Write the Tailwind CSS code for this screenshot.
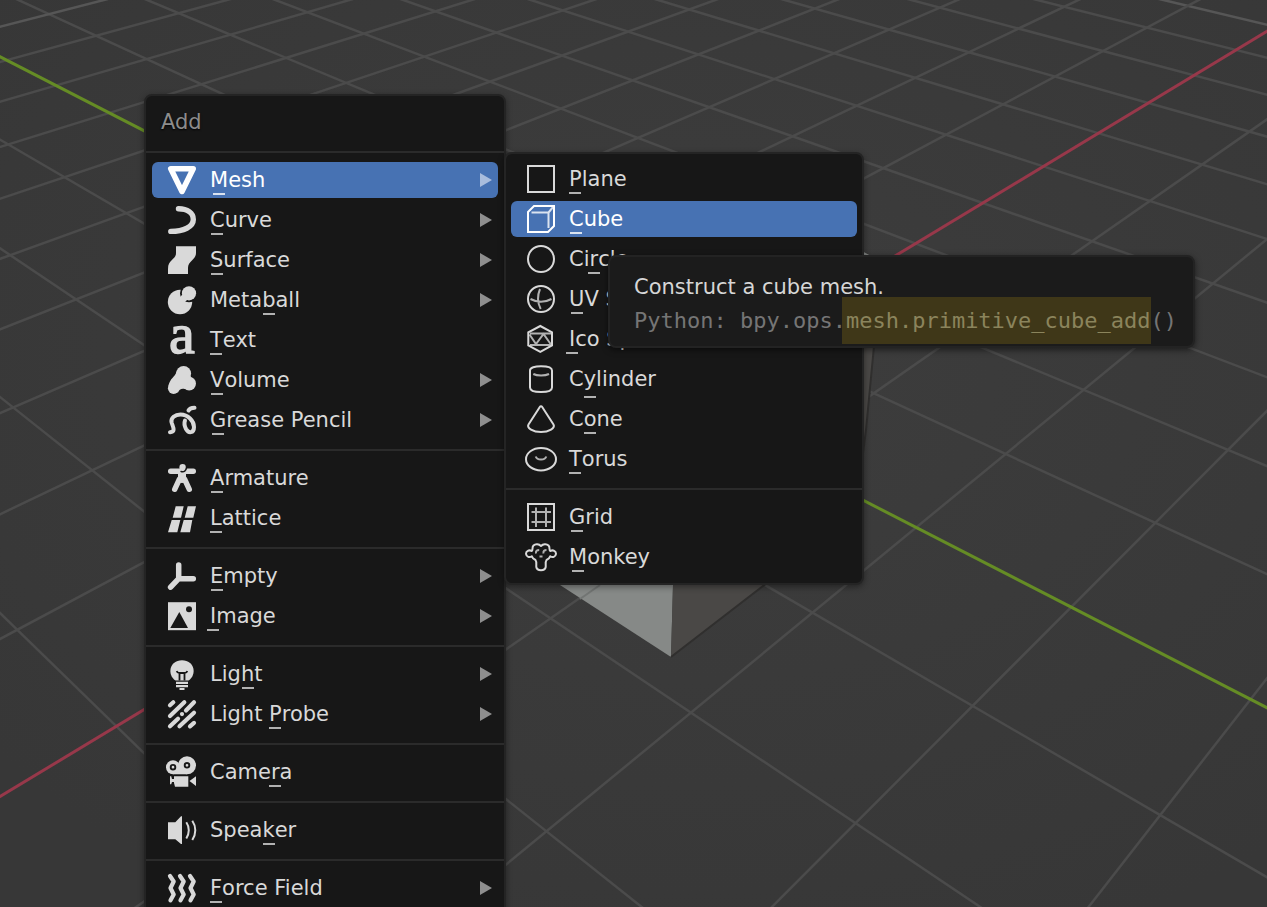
<!DOCTYPE html>
<html lang="en">
<head>
<meta charset="utf-8">
<meta name="viewport" content="width=device-width, initial-scale=1">
<title>Add menu</title>
<script src="https://cdn.jsdelivr.net/npm/@tailwindcss/browser@4"></script>
</head>
<body class="bg-[#393939]">
<main class="relative h-screen overflow-hidden font-['DejaVu_Sans',sans-serif] text-[21px] leading-9 text-[#d9d9d9]">

  <!-- 3D viewport: floor grid, axes and the default cube -->
  <svg class="absolute inset-0 size-full" viewBox="0 0 1267 907" preserveAspectRatio="xMinYMin slice" aria-hidden="true">
    <defs>
      <radialGradient id="floor" cx="0.55" cy="0.4" r="0.7">
        <stop offset="0" stop-color="#3d3d3d"/>
        <stop offset="1" stop-color="#373737"/>
      </radialGradient>
    </defs>
    <rect width="1267" height="907" fill="url(#floor)"/>
    <g id="grid" fill="none" stroke-width="2.5"></g>
    <path d="M560 585L400 480V300H673V585L671 657Z" fill="#868987"/>
    <path d="M580 599L600 585" stroke="#727573" stroke-width="2"/>
    <path d="M673 400V585L671 657L855 515L866 430L882 262Z" fill="#4a4846"/>
    <path d="M671 657L855 515L866 430L882 262" fill="none" stroke="#302f2e" stroke-width="2"/>
    <path d="M860 250L882 262H860Z" fill="#8d908e"/>
  </svg>

  <!-- Add menu -->
  <nav aria-label="Add" class="absolute top-[94px] left-[144px] flex w-[362px] flex-col rounded-lg border-2 border-[#242424] bg-[#171717] pb-10 shadow-[0_2px_6px_#0006] [text-shadow:0_1px_2px_#000] [&_button]:mx-1.5 [&_button]:my-0.5 [&_button]:flex [&_button]:h-9 [&_button]:items-center [&_button]:gap-3 [&_button]:rounded-md [&_button]:pr-1.5 [&_button]:pl-3.5 [&_hr]:mt-[9px] [&_hr]:mb-[7px] [&_hr]:border-t-2 [&_hr]:border-[#2b2b2b] [&_svg]:size-8 [&_svg]:shrink-0 [&_svg]:overflow-visible [&_i]:ml-auto [&_i]:h-3.5 [&_i]:w-3 [&_i]:bg-[#8e8e8e] [&_i]:[clip-path:polygon(0_0,100%_50%,0_100%)] [&_u]:relative [&_u]:no-underline [&_u]:after:absolute [&_u]:after:bottom-[-3px] [&_u]:after:left-1/2 [&_u]:after:h-0.5 [&_u]:after:w-3 [&_u]:after:-translate-x-1/2 [&_u]:after:bg-current [&_u]:after:opacity-80">
    <h1 class="h-[55px] pl-[15px] leading-[52px] text-[#8c8c8c]">Add</h1>
    <div class="mb-[7px] border-t-2 border-[#2b2b2b]"></div>
    <button class="bg-[#4772b3] text-white">
      <svg viewBox="0 0 32 32" aria-hidden="true"><path d="M4.8 4.8H27.2L16 27.4Z" fill="none" stroke="currentColor" stroke-width="5.6" stroke-linejoin="round"/></svg>
      <span><u>M</u>esh</span><i class="bg-[#a9bddd]!"></i>
    </button>
    <button>
      <svg viewBox="0 0 32 32" aria-hidden="true"><path d="M12.5 4.8C21.5 5 27.3 9 27.3 15.5C27.3 23 17.5 27.4 4.8 27.4" fill="none" stroke="currentColor" stroke-width="5.4" stroke-linecap="round"/></svg>
      <span><u>C</u>urve</span><i></i>
    </button>
    <button>
      <svg viewBox="0 0 32 32" aria-hidden="true"><path d="M10 2.2H30V9C30 16 22 17 22 24V30H2V25C2 15 10 16 10 9Z" fill="currentColor"/></svg>
      <span><u>S</u>urface</span><i></i>
    </button>
    <button>
      <svg viewBox="0 0 32 32" aria-hidden="true"><circle cx="14" cy="18" r="12.2" fill="currentColor"/><circle cx="23" cy="9.3" r="9" fill="#171717"/><circle cx="23" cy="9.3" r="7.1" fill="currentColor"/><path d="M14 18L21 11" stroke="currentColor" stroke-width="7"/></svg>
      <span>Meta<u>b</u>all</span><i></i>
    </button>
    <button>
      <svg viewBox="0 0 32 32" aria-hidden="true"><text x="3" y="29" fill="currentColor" stroke="currentColor" stroke-width="1.5" class="font-['Liberation_Serif',serif] text-[58px] [text-shadow:none]">a</text></svg>
      <span><u>T</u>ext</span>
    </button>
    <button>
      <svg viewBox="0 0 32 32" fill="currentColor" aria-hidden="true"><circle cx="17.6" cy="9.6" r="7.5"/><circle cx="7.6" cy="24.2" r="5.7"/><circle cx="23.2" cy="19.6" r="6.8"/><path d="M10.4 8C9 13 4 14 2.4 22L12 28.5C13 25 16 24 19 25L25 12Z"/></svg>
      <span><u>V</u>olume</span><i></i>
    </button>
    <button>
      <svg viewBox="0 0 32 32" fill="none" stroke="currentColor" stroke-width="4" stroke-linecap="round" aria-hidden="true"><path d="M4 28.2C10 27.5 7 23 5.600 18.500C4.500 14 9 10.500 14.500 10.500C22 10.500 28 17 28 23C28 29.500 22.500 29.500 20 25C18.500 22 18 19 19 16.500M22.500 6.500C23.500 4.500 25 4 28.500 3.800"/></svg>
      <span><u>G</u>rease Pencil</span><i></i>
    </button>
    <hr>
    <button>
      <svg viewBox="0 0 32 32" fill="none" stroke="currentColor" stroke-linecap="round" stroke-linejoin="round" aria-hidden="true"><circle cx="16.6" cy="5.300" r="3.200" fill="currentColor" stroke="none"/><path d="M4.700 9.300H27.300" stroke-width="5.400"/><path d="M16 12V17" stroke-width="8"/><path d="M8.700 27.300L13.500 17M23.300 27.300L18.500 17" stroke-width="5.400"/><path d="M15 9.500C18 10.500 20 9 20.800 5" stroke="#171717" stroke-width="1.400"/></svg>
      <span><u>A</u>rmature</span>
    </button>
    <button>
      <svg viewBox="0 0 32 32" fill="currentColor" aria-hidden="true"><path d="M9.700 4.300H17.700L15 15.700H6.700ZM21.700 4.300H30L27.300 15.700H18.700ZM5.700 18H14.300L11.300 30.300H2ZM17.700 18H26.300L24 30.300H14.300Z"/></svg>
      <span><u>L</u>attice</span>
    </button>
    <hr>
    <button>
      <svg viewBox="0 0 32 32" fill="none" stroke="currentColor" stroke-width="5.500" stroke-linecap="round" aria-hidden="true"><path d="M12.700 5V18.700H27.300M12.700 18.700L4.600 27.200"/></svg>
      <span><u>E</u>mpty</span><i></i>
    </button>
    <button>
      <svg viewBox="0 0 32 32" aria-hidden="true"><path d="M2 2.200H30V30.200H2Z" fill="currentColor"/><path d="M4.300 28L13.300 12L22 28Z" fill="#171717"/><circle cx="23" cy="9.300" r="3" fill="#171717"/></svg>
      <span><u>I</u>mage</span><i></i>
    </button>
    <hr>
    <button>
      <svg viewBox="0 0 32 32" aria-hidden="true"><path d="M9.500 22.500C1 17 3 2.200 16 2.200S31 17 22.500 22.500Z" fill="currentColor"/><path d="M10.700 13C11.500 15 12.500 15 16 15S20.500 15 21.300 13M13.500 15V22.500M18.500 15V22.500" fill="none" stroke="#171717" stroke-width="1.800"/><path d="M10 24.800H22M10 28.200H22M13.500 31H18.500" stroke="currentColor" stroke-width="2.200"/></svg>
      <span>Lig<u>h</u>t</span><i></i>
    </button>
    <button>
      <svg viewBox="0 0 32 32" fill="none" stroke="currentColor" stroke-width="4.200" stroke-linecap="round" aria-hidden="true"><path d="M4 7.300L7.300 4.300M4 18L18.300 4.300M4 28.300L12 20.700M20 12.500L28 4.300M13.500 28.300L28 14.700M24 28.300L28 24.900M16 16.100V16"/></svg>
      <span>Light <u>P</u>robe</span><i></i>
    </button>
    <hr>
    <button>
      <svg viewBox="0 0 32 32" aria-hidden="true"><g fill="currentColor"><circle cx="7" cy="11.200" r="7"/><circle cx="21" cy="9.300" r="9"/><path d="M7 13H21V18.300H7ZM8 20.300H22.300V30.700H9L8 27ZM4 20.300H5.200L6 23H8V26H6L5.200 28.300H4ZM30 20.300V30L23.500 25Z"/></g><g fill="none" stroke="#171717" stroke-width="1.900"><circle cx="7" cy="11.200" r="2.300"/><circle cx="21" cy="9.300" r="2.300"/></g></svg>
      <span>Came<u>r</u>a</span>
    </button>
    <hr>
    <button>
      <svg viewBox="0 0 32 32" aria-hidden="true"><path d="M2 8.300H9.300L15 2.300H16V30H15L9.300 25.300H2Z" fill="currentColor"/><path d="M20.300 8.300C23.600 13 23.600 19.500 20.300 24.500M26.300 6.700C30.300 12.500 30.300 20 26.300 26" fill="none" stroke="currentColor" stroke-width="2"/></svg>
      <span>Spea<u>k</u>er</span>
    </button>
    <hr>
    <button>
      <svg viewBox="0 0 32 32" fill="none" stroke="currentColor" stroke-width="4.200" stroke-linecap="round" stroke-linejoin="round" aria-hidden="true"><path d="M4 4L7.700 9.500L4.500 16L7.700 22.500L4.500 28.300M14 4L17.700 9.500L14.500 16L17.700 22.500L14.500 28.300M24 4L27.700 9.500L24.500 16L27.700 22.500L24.500 28.300"/></svg>
      <span><u>F</u>orce Field</span><i></i>
    </button>
  </nav>

  <!-- Mesh submenu -->
  <nav aria-label="Mesh" class="absolute top-[152px] left-[504px] flex w-[360px] flex-col rounded-lg border-2 border-[#242424] bg-[#171717] pt-[5px] pb-1.5 shadow-[0_2px_6px_#0006] [text-shadow:0_1px_2px_#000] [&_button]:mx-[5px] [&_button]:my-0.5 [&_button]:flex [&_button]:h-9 [&_button]:items-center [&_button]:gap-3 [&_button]:rounded-md [&_button]:pl-3.5 [&_hr]:mt-[9px] [&_hr]:mb-[7px] [&_hr]:border-t-2 [&_hr]:border-[#2b2b2b] [&_svg]:size-8 [&_svg]:shrink-0 [&_svg]:fill-none [&_svg]:stroke-current [&_svg]:stroke-2 [&_u]:relative [&_u]:no-underline [&_u]:after:absolute [&_u]:after:bottom-[-3px] [&_u]:after:left-1/2 [&_u]:after:h-0.5 [&_u]:after:w-3 [&_u]:after:-translate-x-1/2 [&_u]:after:bg-current [&_u]:after:opacity-80">
    <button>
      <svg viewBox="0 0 32 32" aria-hidden="true"><path d="M3 3H29V29H3Z"/></svg>
      <span><u>P</u>lane</span>
    </button>
    <button class="bg-[#4772b3] text-white">
      <svg viewBox="0 0 32 32" aria-hidden="true"><path d="M3 9L9 3H29V23L23 29H3Z"/><path d="M6.500 9.500H23.500M23.500 9.500V25M23.500 9.500L28.500 3.500" opacity=".8"/></svg>
      <span><u>C</u>ube</span>
    </button>
    <button>
      <svg viewBox="0 0 32 32" aria-hidden="true"><circle cx="16" cy="16" r="13"/></svg>
      <span>Ci<u>r</u>cle</span>
    </button>
    <button>
      <svg viewBox="0 0 32 32" aria-hidden="true"><circle cx="16" cy="16" r="13"/><path d="M15 6C12.500 12 12.500 20 15.700 26M5.500 16C12 19.500 20 19.500 26.500 16" opacity=".8"/></svg>
      <span><u>U</u>V Sphere</span>
    </button>
    <button>
      <svg viewBox="0 0 32 32" aria-hidden="true"><path d="M15.300 3L27 9.300V22.500L15.300 28.800L3.300 22.500V9.300Z"/><path d="M5 10.500H26M5 22H26M4.500 11.500L11 21L18.500 11L26 21.500" opacity=".8"/></svg>
      <span><u>I</u>co Sphere</span>
    </button>
    <button>
      <svg viewBox="0 0 32 32" aria-hidden="true"><path d="M5 7.500C5 4.500 10 3.300 16 3.300S27 4.500 27 7.500V24.500C27 27.500 22 29 16 29S5 27.500 5 24.500Z"/><path d="M8.300 11C12 13 20 13 24 11" opacity=".8"/></svg>
      <span>C<u class="after:bottom-[-7px]!">y</u>linder</span>
    </button>
    <button>
      <svg viewBox="0 0 32 32" aria-hidden="true"><path d="M14.800 4C15.400 3.100 16.600 3.100 17.200 4L28.500 21.500C30.500 25 24 29 16 29S1.500 25 3.500 21.500Z"/></svg>
      <span>C<u>o</u>ne</span>
    </button>
    <button>
      <svg viewBox="0 0 32 32" aria-hidden="true"><ellipse cx="16" cy="16.200" rx="15" ry="11.200"/><path d="M10.700 13.500C12 17.500 20 17.500 21.300 13.500" opacity=".8"/></svg>
      <span><u>T</u>orus</span>
    </button>
    <hr>
    <button>
      <svg viewBox="0 0 32 32" aria-hidden="true"><path d="M3 3H29V29H3Z"/><path d="M11 6.500V26M21 6.500V26M6.500 11H26M6.500 21H26" opacity=".8"/></svg>
      <span><u>G</u>rid</span>
    </button>
    <button>
      <svg viewBox="0 0 32 32" stroke-linejoin="round" aria-hidden="true"><path d="M16 5C14 3 10.500 2.500 8.500 4.500C6.500 6.500 8.500 9 6.500 10C4 8.500 1 10 1 12.800C1.500 16 4.500 17 6.800 15.200C7.500 17.500 9 18.300 10.500 19C12 21 11 24 11.300 26C12 30.200 20 30.200 20.700 26C21 24 20 21 21.500 19C23 18.300 24.500 17.500 25.200 15.200C27.500 17 30.500 16 31 12.800C31 10 28 8.500 25.500 10C23.500 9 25.500 6.500 23.500 4.500C21.500 2.500 18 3 16 5Z"/><path d="M11 12.500C10.500 10 12 9 14.200 9M18.500 12.500C18 10 19.500 9 21.500 9M14.500 15.500H17.500" opacity=".8"/></svg>
      <span><u>M</u>onkey</span>
    </button>
  </nav>

  <!-- Tooltip of the Cube entry -->
  <div role="tooltip" class="absolute top-[255px] left-[608px] rounded-lg border-2 border-[#232323] bg-[#1b1b1b] pt-[13px] pr-4 pb-2 pl-6 leading-[34px] whitespace-nowrap shadow-[0_2px_6px_#0008]">
    <p class="text-[#d6d6d6]">Construct a cube mesh.</p>
    <p class="font-['DejaVu_Sans_Mono',monospace] text-[22px] text-[#757575]">Python: bpy.ops.<mark class="-ml-1 bg-[#3f3718] py-[11px] pl-1 text-[#8b845c]">mesh.primitive_cube_add</mark>()</p>
  </div>
</main>

<script>
  // Perspective floor grid: (u, v) are floor units along the red and green axes.
  const project = (u, v) => {
    const w = 1 + 0.0648 * u - 0.0598 * v;
    return ((661.8 + 143.9 * u + 72.4 * v) / w).toFixed(1) + ' ' + ((396.8 - 35.3 * u + 33.8 * v) / w).toFixed(1);
  };
  const grid = document.getElementById('grid');
  const line = (from, to, color) => {
    const path = document.createElementNS('http://www.w3.org/2000/svg', 'path');
    path.setAttribute('d', 'M' + from + 'L' + to);
    path.setAttribute('stroke', color);
    grid.append(path);
  };
  for (let u = -12; u <= 20; u++) {
    if (u) line(project(u, -30), project(u, (0.9 + 0.0648 * u) / 0.0598), u % 10 ? '#4b4b4b' : '#565656');
  }
  for (let v = -20; v <= 12; v++) {
    if (v) line(project((0.0598 * v - 0.9) / 0.0648, v), project(30, v), v % 10 ? '#4b4b4b' : '#565656');
  }
  line(project(-13, 0), project(30, 0), '#97384a');
  line(project(0, -30), project(0, 14), '#658c25');
  grid.lastChild.setAttribute('stroke-width', '3');
  grid.lastChild.previousSibling.setAttribute('stroke-width', '3');
</script>
</body>
</html>
